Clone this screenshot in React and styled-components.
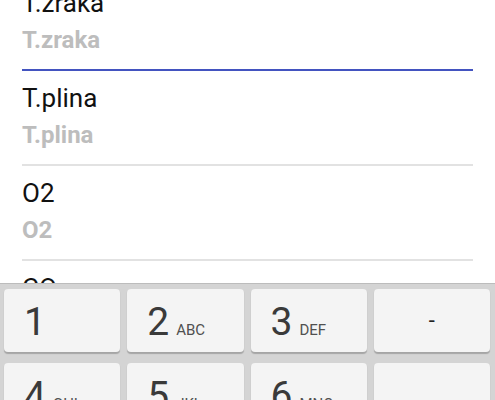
import styled, { createGlobalStyle } from "styled-components";

const FIELDS = [
  { label: "T.zraka", value: "T.zraka", focused: true },
  { label: "T.plina", value: "T.plina" },
  { label: "O2", value: "O2" },
  { label: "CO", value: "CO" },
];

const KEY_ROWS = [
  [
    { digit: "1" },
    { digit: "2", letters: "ABC" },
    { digit: "3", letters: "DEF" },
    { symbol: "-" },
  ],
  [
    { digit: "4", letters: "GHI" },
    { digit: "5", letters: "JKL" },
    { digit: "6", letters: "MNO" },
    { symbol: "" },
  ],
];

const GlobalStyle = createGlobalStyle`
  html, body {
    margin: 0;
    padding: 0;
    background: #ffffff;
  }
  body {
    font-family: Roboto, "Noto Sans", "Liberation Sans", sans-serif;
  }
`;

export default function App() {
  return (
    <>
      <GlobalStyle />
      <Screen>
        <FormArea>
          <FieldList>
            {FIELDS.map((field) => (
              <Field key={field.label}>
                <Label>{field.label}</Label>
                <Value>{field.value}</Value>
                <Underline $focused={field.focused} />
              </Field>
            ))}
          </FieldList>
        </FormArea>
        <Keyboard>
          {KEY_ROWS.map((row, i) => (
            <KeyRow key={i}>
              {row.map((k, j) =>
                k.digit ? (
                  <Key key={j}>
                    <Digit>{k.digit}</Digit>
                    {k.letters ? <Letters>{k.letters}</Letters> : null}
                  </Key>
                ) : (
                  <Key key={j} $center>
                    <Symbol>{k.symbol}</Symbol>
                  </Key>
                )
              )}
            </KeyRow>
          ))}
        </Keyboard>
      </Screen>
    </>
  );
}

const Screen = styled.div`
  display: flex;
  flex-direction: column;
  width: 495px;
  height: 400px;
  overflow: hidden;
  background: #ffffff;
`;

const FormArea = styled.div`
  height: 283px;
  flex-shrink: 0;
  overflow: hidden;
`;

const FieldList = styled.div`
  display: flex;
  flex-direction: column;
  margin-top: -24px;
  padding: 0 22px;
`;

const Field = styled.div`
  display: flex;
  flex-direction: column;
  padding-top: 12px;
`;

const Label = styled.div`
  font-size: 26px;
  line-height: 30px;
  color: #111111;
`;

const Value = styled.div`
  margin-top: 8px;
  font-size: 24px;
  font-weight: 700;
  line-height: 28px;
  color: #bdbdbd;
`;

const Underline = styled.div`
  margin-top: 15px;
  height: 2px;
  background: ${({ $focused }) => ($focused ? "#4354c0" : "#e2e2e2")};
`;

const Keyboard = styled.div`
  flex: 1;
  display: flex;
  flex-direction: column;
  gap: 11px;
  padding: 5px 5px 0 4px;
  background: #d4d4d4;
  border-top: 1px solid #bcbcbc;
`;

const KeyRow = styled.div`
  display: grid;
  grid-template-columns: repeat(4, 1fr);
  gap: 7px;
`;

const Key = styled.div`
  display: flex;
  align-items: ${({ $center }) => ($center ? "center" : "baseline")};
  justify-content: ${({ $center }) => ($center ? "center" : "flex-start")};
  height: 63px;
  padding: ${({ $center }) => ($center ? "0" : "14px 0 0 20px")};
  box-sizing: border-box;
  background: #f4f4f4;
  border-radius: 4px;
  box-shadow: 0 1.5px 1px rgba(0, 0, 0, 0.22);
`;

const Digit = styled.span`
  font-size: 39px;
  line-height: 39px;
  color: #3a3a3a;
`;

const Letters = styled.span`
  margin-left: 7px;
  font-size: 15px;
  color: #505050;
`;

const Symbol = styled.span`
  font-size: 22px;
  color: #222222;
`;
